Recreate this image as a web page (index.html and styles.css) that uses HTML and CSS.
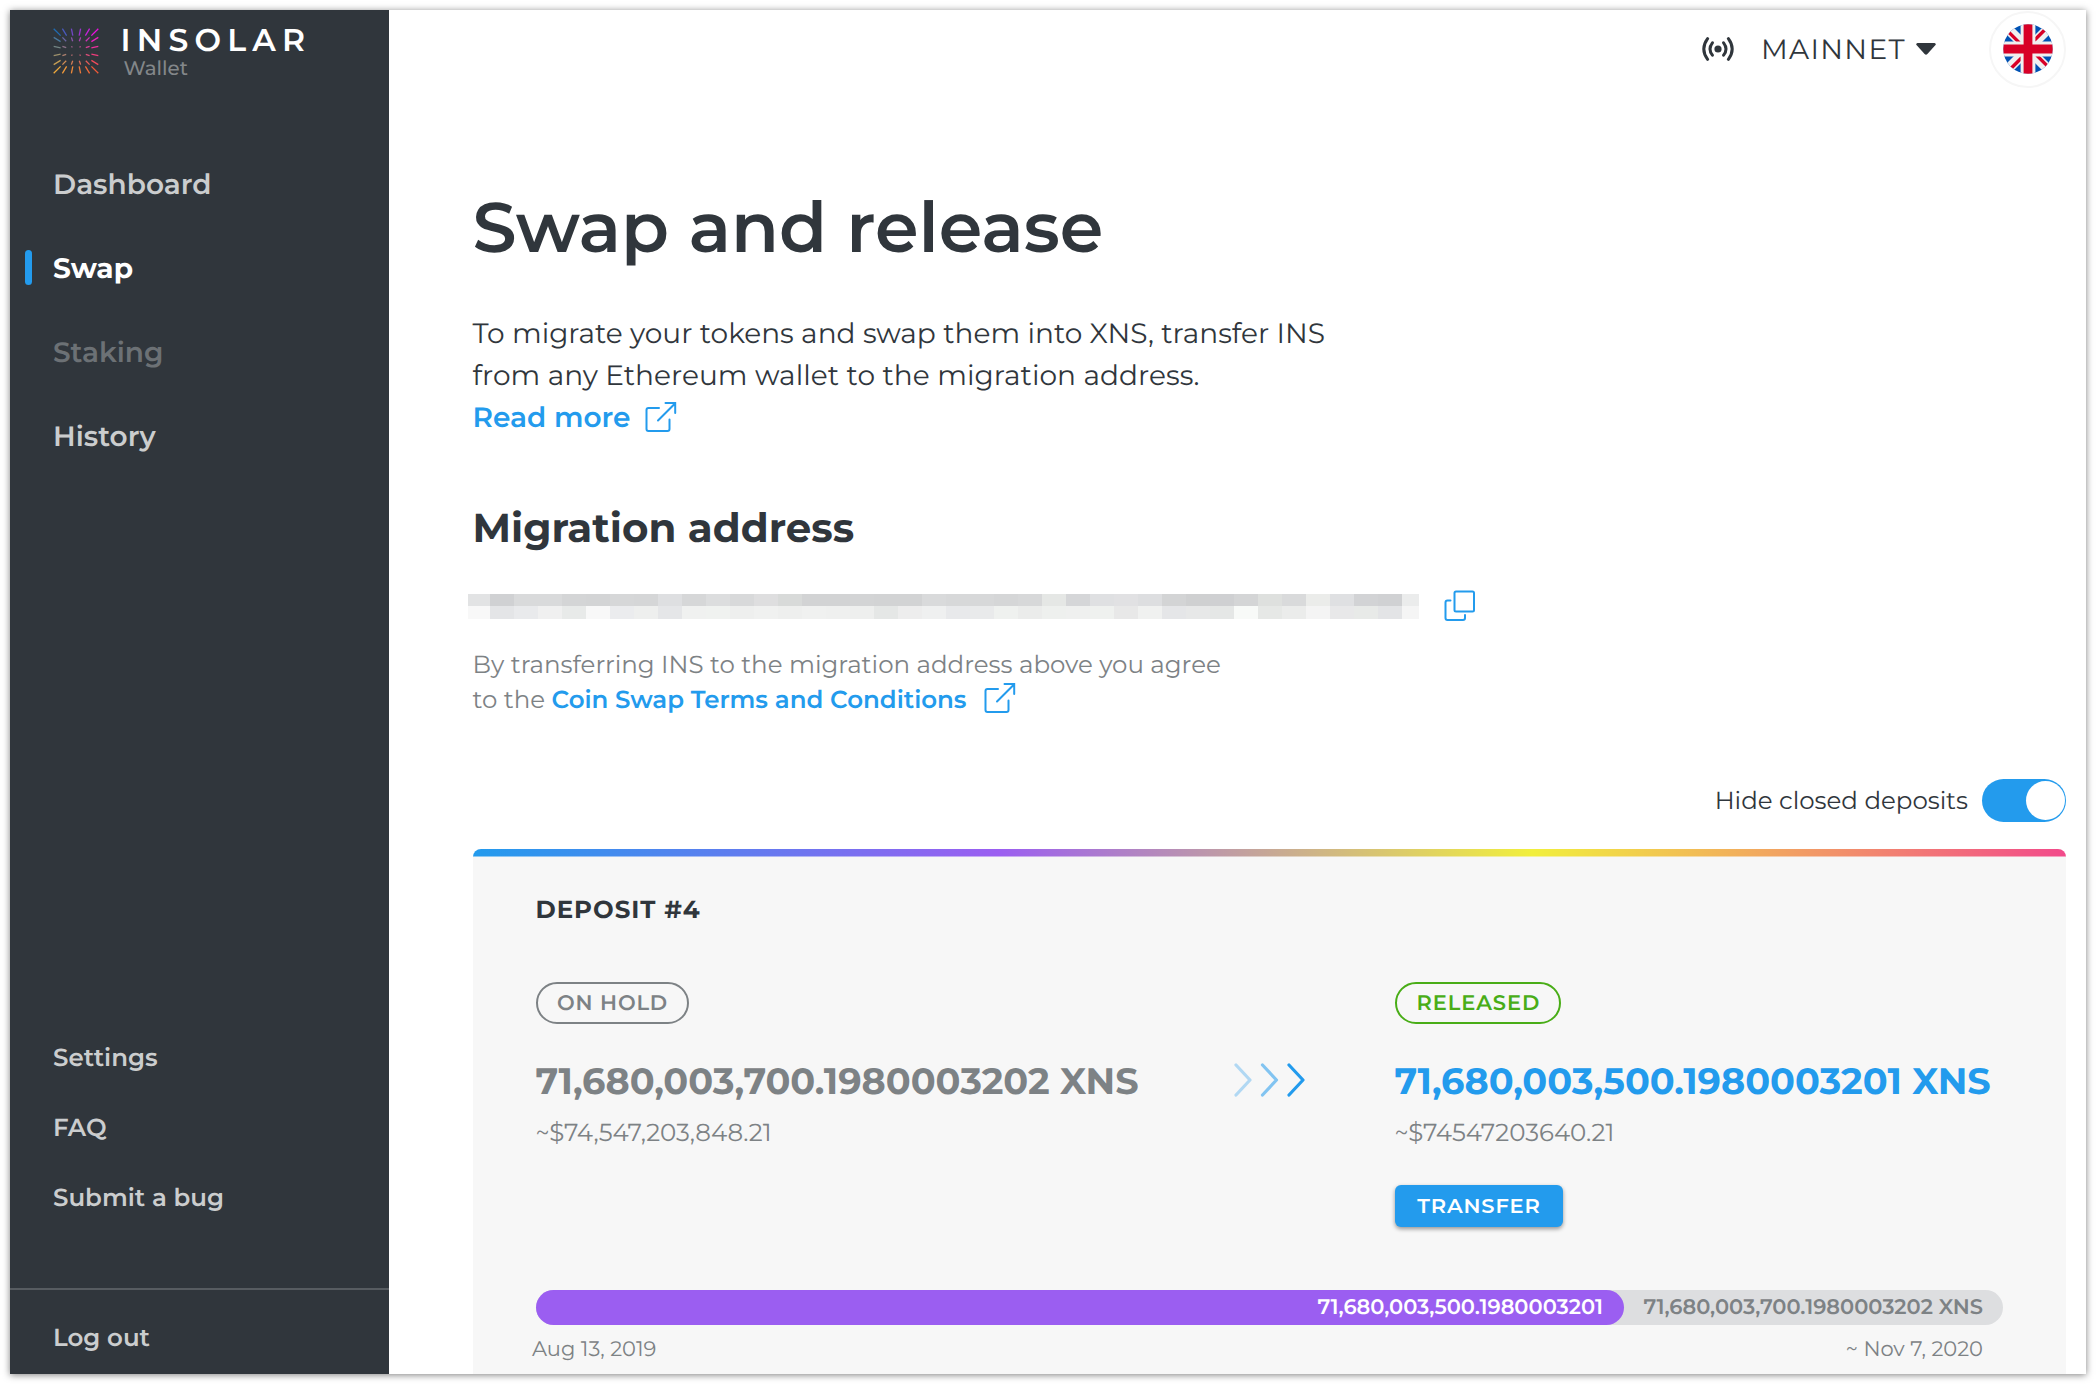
FILE: index.html
```html
<!DOCTYPE html>
<html lang="en">
<head>
<meta charset="utf-8">
<title>Insolar Wallet</title>
<link rel="stylesheet" href="styles.css">
</head>
<body>
<div class="window">
  <aside class="sidebar">
    <div class="brand">
      <svg class="brand-mark" id="brand-mark" viewBox="-23 -23 46 46"></svg>
      <div class="brand-text">
        <span class="brand-name">INSOLAR</span>
        <span class="brand-sub">Wallet</span>
      </div>
    </div>
    <nav class="nav">
      <a class="nav-item">Dashboard</a>
      <a class="nav-item active">Swap</a>
      <a class="nav-item disabled">Staking</a>
      <a class="nav-item">History</a>
    </nav>
    <nav class="nav-small">
      <a class="small-item">Settings</a>
      <a class="small-item">FAQ</a>
      <a class="small-item">Submit a bug</a>
    </nav>
    <div class="logout"><a class="small-item">Log out</a></div>
  </aside>
  <main class="main">
    <header class="topbar">
      <svg class="signal" viewBox="-17 -14 34 28" fill="none" stroke="#30363c" stroke-width="3" stroke-linecap="round">
        <circle r="3.6" fill="#30363c" stroke="none"/>
        <path d="M-5.6-6.2Q-10.4 0-5.6 6.2M5.6-6.2Q10.4 0 5.6 6.2M-10.4-10.3Q-18 0-10.4 10.3M10.4-10.3Q18 0 10.4 10.3"/>
      </svg>
      <span class="network">MAINNET</span>
      <svg class="caret" viewBox="0 0 20 12"><path d="M1.5 0h17q1.5.2 1.2 1.8L11.4 11Q10 12.5 8.6 11L.3 1.8Q0 .2 1.5 0z" fill="#30363c"/></svg>
      <div class="lang">
        <svg viewBox="0 0 50 50">
          <clipPath id="disc"><circle cx="25" cy="25" r="24.7"/></clipPath>
          <g clip-path="url(#disc)">
            <path fill="#0052b4" d="M0 0h50v50H0z"/>
            <path stroke="#f0f0f0" stroke-width="10" d="M3 3l44 44M47 3L3 47"/>
            <path stroke="#d80027" stroke-width="3.4" d="M2 4.400L23 25.400M48 45.600L27 24.600M45.600 2L24.600 23M4.400 48L25.400 27"/>
            <path fill="#f0f0f0" d="M17.600 0h14.800v50H17.600zM0 17.600h50v14.800H0z"/>
            <path fill="#d80027" d="M20.600 0h8.800v50h-8.800zM0 20.600h50v8.800H0z"/>
          </g>
        </svg>
      </div>
    </header>
    <div class="content">
      <h1>Swap and release</h1>
      <p class="intro">To migrate your tokens and swap them into XNS, transfer INS<br><span class="l2">from any Ethereum wallet to the migration address.</span><br><a class="more">Read more</a><svg class="ext" viewBox="0 0 32 32"><path d="M14 7H3.500Q1.500 7 1.500 9V28Q1.500 30 3.500 30H22.500Q24.500 30 24.500 28V18.500M13 19.500L30 2.500M20.500 2H30.200V12"/></svg></p>
      <h2>Migration address</h2>
      <div class="address">
        <svg class="redacted" id="redacted" viewBox="0 0 951 25" shape-rendering="crispEdges"></svg>
        <svg class="copy" viewBox="0 0 32 32"><rect x="10.500" y="1.500" width="19.500" height="20" rx="1.5"/><path d="M6.500 10.500H3.500Q1.500 10.500 1.500 12.500V28Q1.500 30 3.500 30H19Q21 30 21 28V25"/></svg>
      </div>
      <p class="note">By transferring INS to the migration address above you agree<br>to the <a class="terms">Coin Swap Terms and Conditions</a><svg class="ext" viewBox="0 0 32 32"><path d="M14 7H3.500Q1.500 7 1.500 9V28Q1.500 30 3.500 30H22.500Q24.500 30 24.500 28V18.500M13 19.500L30 2.500M20.500 2H30.200V12"/></svg></p>
      <div class="filter">
        <span class="filter-label">Hide closed deposits</span>
        <span class="toggle"></span>
      </div>
      <section class="card">
        <h3>DEPOSIT #4</h3>
        <div class="columns">
          <div class="col hold">
            <span class="pill">ON HOLD</span>
            <div class="amount">71,680,003,700.1980003202 XNS</div>
            <div class="fiat">~$74,547,203,848.21</div>
          </div>
          <svg class="arrows" viewBox="0 0 72 34" fill="none" stroke="#239bed" stroke-width="3.2" stroke-linecap="round" stroke-linejoin="round">
            <path d="M3 2l14 15L3 32" opacity=".33"/><path d="M29.500 2l14 15-14 15" opacity=".55"/><path d="M56 2l14 15-14 15"/>
          </svg>
          <div class="col released">
            <span class="pill">RELEASED</span>
            <div class="amount">71,680,003,500.1980003201 XNS</div>
            <div class="fiat">~$74547203640.21</div>
            <button class="transfer">TRANSFER</button>
          </div>
        </div>
        <div class="progress">
          <div class="done">71,680,003,500.1980003201</div>
          <div class="rest">71,680,003,700.1980003202 XNS</div>
        </div>
        <div class="dates"><span>Aug 13, 2019</span><span>~ Nov 7, 2020</span></div>
      </section>
    </div>
  </main>
</div>
<script src="script.js"></script>
</body>
</html>
```
FILE: styles.css
```css
* { box-sizing: border-box; margin: 0; padding: 0; }
body {
  padding: 10px;
  background: #fff;
  color: #30363c;
  font-family: Montserrat, Inter, "Liberation Sans", sans-serif;
  text-rendering: geometricPrecision;
  overflow: hidden;
}
.window {
  display: flex;
  width: 2076px;
  height: 1364px;
  background: #fff;
  box-shadow: 0 1px 7px rgba(0, 0, 0, .5);
}
.window > * { overflow: hidden; }

/* Sidebar */
.sidebar {
  display: flex;
  flex-direction: column;
  width: 378.500px;
  flex: none;
  background: #30363c;
}
.brand { display: flex; height: 133px; padding: 14px 0 0 43px; }
.brand-mark { width: 46px; height: 46px; margin-top: 4px; }
.brand-text { display: flex; flex-direction: column; margin-left: 21.500px; white-space: nowrap; }
.brand-name { font-size: 31.500px; line-height: 33px; font-weight: 600; letter-spacing: 6.200px; color: #fff; }
.brand-sub { padding-left: 3px; font-size: 19.800px; line-height: 22px; font-weight: 500; color: #83878a; }
.nav { display: flex; flex-direction: column; flex: 1; }
.nav-item {
  display: flex;
  align-items: center;
  height: 84px;
  padding-left: 43px;
  font-size: 28px;
  font-weight: 600;
  color: #cbcdce;
}
.nav-item.active { padding-left: 15px; font-weight: 700; letter-spacing: .050px; color: #fff; }
.nav-item.active::before { content: ""; width: 7px; height: 35px; margin: 0 21px 3px 0; border-radius: 4px; background: #239bed; }
.nav-item.disabled { color: #6c7175; }
.nav-small { padding-bottom: 55px; }
.small-item {
  display: flex;
  align-items: center;
  height: 70px;
  padding-left: 43px;
  font-size: 24.500px;
  font-weight: 600;
  color: #cbcdce;
}
.logout { height: 86px; padding-top: 13px; border-top: 2px solid #575c61; }

/* Main area */
.main { flex: 1; display: flex; flex-direction: column; }
.topbar { display: flex; align-items: center; justify-content: flex-end; height: 78px; padding-right: 20px; flex: none; }
.signal { width: 34px; height: 28px; }
.network { margin-left: 26px; padding-top: 2px; font-size: 28px; line-height: 40px; letter-spacing: 1.350px; }
.caret { width: 20px; height: 12px; margin-left: 10px; }
.lang { display: flex; align-items: center; justify-content: center; width: 77px; height: 77px; margin-left: 53px; border: 2px solid #f6f6f6; border-radius: 50%; }
.lang svg { width: 50px; height: 50px; }
.content { display: flex; flex-direction: column; flex: 1; min-height: 0; padding: 97px 20px 0 84px; }
h1 { font-size: 70px; line-height: 84px; font-weight: 600; white-space: nowrap; }
.intro { margin-top: 44px; height: 126px; font-size: 28px; line-height: 42px; white-space: nowrap; }
.l2 { letter-spacing: .050px; }
.more { font-weight: 600; color: #239bed; }
.ext { width: 32px; height: 32px; margin: -8px 0 0 15px; vertical-align: -6px; fill: none; stroke: #239bed; stroke-width: 2; stroke-linecap: round; }
h2 { margin-top: 66px; font-size: 40.400px; line-height: 48px; font-weight: 700; }
.address { display: flex; align-items: center; height: 34px; margin: 35px 0 0 -4.500px; }
.redacted { width: 951px; height: 25px; margin-top: 3px; }
.copy { width: 32px; height: 32px; margin: 1px 0 0 25px; fill: none; stroke: #239bed; stroke-width: 2; stroke-linecap: round; }
.note { margin-top: 26px; height: 70px; font-size: 24.520px; line-height: 35px; color: #7d8285; white-space: nowrap; }
.terms { font-weight: 600; color: #239bed; }
.note .ext { margin-left: 18px; vertical-align: -6px; }
.filter { display: flex; align-items: center; justify-content: flex-end; height: 43px; margin-top: 61px; font-size: 24.500px; }
.filter-label { padding-top: 1px; }
.toggle { display: flex; justify-content: flex-end; width: 84px; height: 43px; margin-left: 14px; padding: 2px 1.500px; border-radius: 22px; background: #239bed; }
.toggle::after { content: ""; width: 39px; height: 39px; border-radius: 50%; background: #fff; }

/* Deposit card */
.card {
  flex: 1;
  min-height: 0;
  margin-top: 27px;
  padding: 46px 63px 0 63px;
  border-radius: 8px 8px 0 0;
  background: linear-gradient(90deg, #239bed, #9b5ef1 33%, #f1ef3d 66.500%, #f24a8b) top / 100% 7.500px no-repeat, #f7f7f7;
  overflow: hidden;
}
h3 { font-size: 24.500px; line-height: 30px; font-weight: 700; letter-spacing: .960px; }
.columns { display: flex; align-items: flex-start; height: 245px; margin-top: 57px; white-space: nowrap; }
.col { display: flex; flex-direction: column; align-items: flex-start; }
.hold { width: 697px; color: #7d8285; }
.released { color: #239bed; }
.pill { width: 153.500px; height: 42px; padding-left: 19.500px; border: 2px solid #7d8285; border-radius: 21px; font-size: 21px; line-height: 40px; font-weight: 600; letter-spacing: .850px; }
.released .pill { width: 166px; padding-left: 20px; border-color: #49ad17; color: #49ad17; letter-spacing: .900px; }
.amount { margin-top: 36px; font-size: 36.700px; line-height: 44px; font-weight: 700; }
.fiat { margin-top: 14px; font-size: 24.520px; line-height: 30px; color: #7d8285; }
.arrows { width: 72px; height: 34px; margin: 81px 90px 0 0; }
.transfer {
  height: 42px;
  width: 168px;
  margin-top: 37px;
  border: 0;
  border-radius: 6px;
  background: #239bed;
  box-shadow: 0 2px 4px rgba(0, 0, 0, .4);
  color: #fff;
  font: 600 21px/42px Montserrat, Inter, sans-serif;
  letter-spacing: .835px;
  text-indent: 1px;
}
.progress { display: flex; height: 35px; margin-top: 63px; border-radius: 18px; background: #dddee0; font-size: 21px; line-height: 35px; font-weight: 600; white-space: nowrap; color: #7d8285; }
.done { width: 1088.500px; padding-right: 21px; border-radius: 18px; background: #9b5ef1; color: #fff; text-align: right; }
.rest { flex: 1; padding-right: 20px; text-align: right; }
.dates { display: flex; justify-content: space-between; margin: 11px 20px 0 -3.500px; font-size: 21px; line-height: 27px; color: #7d8285; }
```
FILE: script.js
```js
const NS = "http://www.w3.org/2000/svg";
function add(parent, name, attrs) {
  const el = document.createElementNS(NS, name);
  for (const key in attrs) el.setAttribute(key, attrs[key]);
  parent.appendChild(el);
}

// Masked address: two rows of grey cells, the first and last ones cut short.
const rows = [
  "e2e3e4 d0d1d3 d9dadb d9dadb d4d5d6 d3d4d5 d6d7d8 d5d6d7 dedfe1 d6d7d8 dcddde d8d9da dededf d8dad9 d2d3d4 d2d3d4 d3d4d5 d2d3d4 d2d3d4 d9dadb d7d8d9 d7d8d9 d5d6d7 d7d8d9 e5e7e5 d5d6d8 dfe0e2 e1e1e3 dddee0 d3d4d5 cfd0d1 cfd0d2 d4d5d6 dee0de d9dadb ebecea dfe0e2 d2d3d5 d0d1d3 ebecec",
  "f8f8f8 e4e5e7 e9eaec f0f0f0 e8eae9 f8f8f8 ebecee eeefee e5e6e8 f0f1f0 f0f2f0 eeefee f0f1f0 eeefee f0f1f0 eff0ef eeefee e5e7e6 ededed eff0f0 e8e9eb e9eaeb eff1ef ebeceb eef0ee eff0ef eff1ef e8e8e8 f0f1f0 e5e6e8 e7e8e8 e5e7e6 f8faf8 e6e8e6 ebeceb f4f4f4 e8e8e9 e8eae8 e3e4e6 f5f5f5"
];
rows.forEach((row, r) => row.split(" ").forEach((color, i) => {
  const x = i ? 22 + (i - 1) * 24 : 0;
  add(document.getElementById("redacted"), "rect", {
    x, y: r * 12, width: i ? (i === 39 ? 17 : 24) : 22, height: r ? 13 : 12, fill: "#" + color
  });
}));

// Brand mark: a 6 by 6 field of rays pointing to the centre.
const ends = [-22.3, -13.6, -4.6, 4.6, 13.6, 22.3];
const corners = [[32, 108, 180], [238, 16, 226], [240, 170, 60], [240, 90, 56]];
ends.forEach((y, j) => ends.forEach((x, i) => {
  const u = i / 5, v = j / 5;
  const rgb = [0, 1, 2].map(k => Math.round(
    (corners[0][k] * (1 - u) + corners[1][k] * u) * (1 - v) +
    (corners[2][k] * (1 - u) + corners[3][k] * u) * v));
  const m = Math.max(Math.abs(x), Math.abs(y));
  const s = m > 20 ? 0.69 : m > 10 ? 0.72 : 0.78;
  add(document.getElementById("brand-mark"), "line", {
    x1: x, y1: y, x2: x * s, y2: y * s, stroke: `rgb(${rgb})`, "stroke-width": 1.3
  });
}));
```
